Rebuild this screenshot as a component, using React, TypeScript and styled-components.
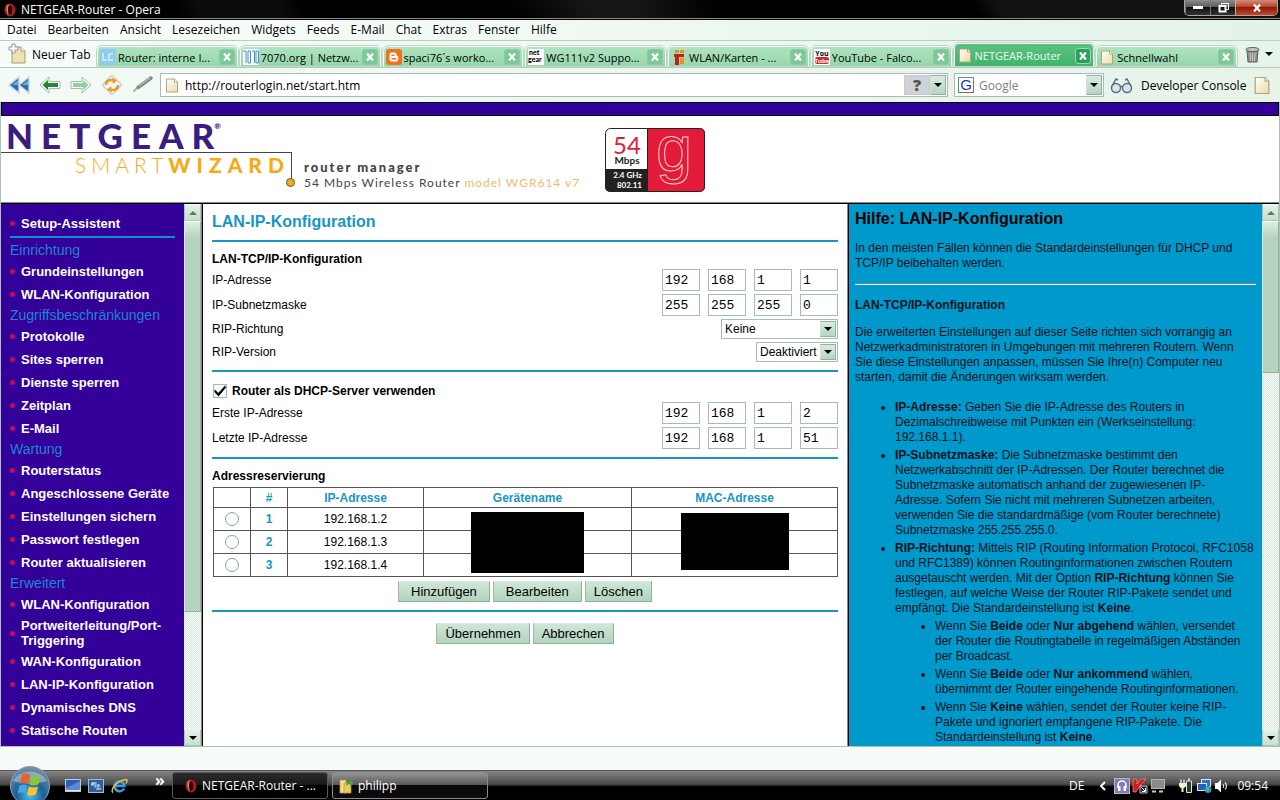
import React from "react";
import styled, { createGlobalStyle, css } from "styled-components";

const UI = `"Open Sans", "Noto Sans", sans-serif`;
const ARIAL = `"Liberation Sans", Arial, sans-serif`;
const LOGO = `Lato, "Liberation Sans", sans-serif`;

const Global = createGlobalStyle`
  * { box-sizing: border-box; }
  html, body { margin: 0; padding: 0; }
  body { font-family: ${UI}; font-size: 12px; color: #000; background: #f6fbf7; }
  button, input, select { font: inherit; margin: 0; }
  a { color: inherit; text-decoration: none; }
  svg { display: block; flex: none; }
`;

const Screen = styled.div`
  display: flex;
  flex-direction: column;
  height: 100vh;
  overflow: hidden;
`;

/* ---------- window chrome ---------- */
const TitleBar = styled.header`
  display: flex;
  justify-content: space-between;
  height: 20px;
  padding: 0 2px 0 3px;
  color: #fff;
  background: linear-gradient(60deg, #000 0 14%, #0c0c0c 16% 22%, #000 24% 40%, #151515 46% 50%, #000 56% 76%, #111 78%);
  border-bottom: 1px solid #000;
  box-shadow: inset 0 -1px #8a8a8a;
`;
const TitleText = styled.h1`
  display: flex;
  align-items: center;
  gap: 4px;
  margin: 0;
  font-size: 12px;
  font-weight: 400;
  line-height: 18px;
  height: 19px;
`;
const WindowButtons = styled.div`
  display: flex;
  height: 16px;
  border: 1px solid #a5a5a5;
  border-top: 0;
  border-radius: 0 0 5px 5px;
  overflow: hidden;
`;
const WindowButton = styled.button<{ $close?: boolean }>`
  display: flex;
  align-items: center;
  justify-content: center;
  width: ${(p) => (p.$close ? 42 : 25)}px;
  padding: 0;
  border: 0;
  border-left: ${(p) => (p.$close ? "1px solid #d9a59a" : "1px solid #777")};
  background: ${(p) =>
    p.$close
      ? "linear-gradient(#d08a7c, #b8402a 48%, #8c1c08 50%, #c8452a)"
      : "linear-gradient(#8a8c90, #55575b 48%, #111 50%, #333)"};
`;

const MenuBar = styled.nav`
  display: flex;
  align-items: center;
  gap: 11px;
  height: 21px;
  padding: 0 7px;
  background: linear-gradient(90deg, #fbfefc, #eef8f1 50%, #e4f3e9);
  border-bottom: 1px solid #b9cdc1;
`;
const MenuItem = styled.a`
  line-height: 20px;
`;

const TabBar = styled.div`
  display: flex;
  height: 27px;
  background: linear-gradient(90deg, #f6fcf8, #e6f4ea);
  border-bottom: 1px solid #b4ccbb;
`;
const NewTab = styled.button`
  display: flex;
  align-items: center;
  gap: 4px;
  width: 96px;
  padding: 0 0 0 8px;
  border: 0;
  background: none;
  white-space: nowrap;
`;
const Tabs = styled.div`
  display: flex;
  flex: 1;
  min-width: 0;
  align-items: flex-end;
`;
const Tab = styled.div<{ $active?: boolean }>`
  display: flex;
  flex: 1;
  min-width: 0;
  align-items: center;
  gap: 2px;
  height: ${(p) => (p.$active ? 25 : 22)}px;
  padding: 0 2px;
  border: 2px solid #f4fbf6;
  border-bottom: 0;
  border-radius: 6px 6px 0 0;
  outline: 1px solid #c3d5c9;
  outline-offset: -1px;
  font-size: 11px;
  color: ${(p) => (p.$active ? "#e9fff0" : "#000")};
  background: ${(p) =>
    p.$active
      ? "linear-gradient(#5ec083, #3eb36b)"
      : "linear-gradient(#aee3bf, #95d6ab)"};
`;
const TabTitle = styled.a`
  flex: 1;
  min-width: 0;
  overflow: hidden;
  white-space: nowrap;
`;
const TabClose = styled.button<{ $active?: boolean }>`
  display: flex;
  flex: none;
  align-items: center;
  justify-content: center;
  width: 16px;
  height: 16px;
  padding: 0;
  border: 1px solid ${(p) => (p.$active ? "#8fe0ab" : "#8fcaa4")};
  border-radius: 3px;
  background: ${(p) => (p.$active ? "#2fa05c" : "#7cc897")};
`;
const TrashButton = styled.button`
  display: flex;
  align-items: center;
  gap: 5px;
  width: 42px;
  padding: 0 0 0 7px;
  border: 0;
  background: none;
`;

const AddressBar = styled.div`
  display: flex;
  align-items: center;
  height: 34px;
  padding: 0 10px 0 8px;
  background: linear-gradient(90deg, #f3faf5, #e5f3e9);
`;
const NavButtons = styled.div`
  display: flex;
  gap: 9px;
  width: 152px;
`;
const IconButton = styled.button`
  display: flex;
  padding: 0;
  border: 0;
  background: none;
`;
const Field = styled.div<{ $search?: boolean }>`
  display: flex;
  align-items: center;
  flex: ${(p) => (p.$search ? "none" : "1")};
  width: ${(p) => (p.$search ? "150px" : "auto")};
  min-width: 0;
  height: 24px;
  padding: 1px 1px 1px 3px;
  gap: 5px;
  margin-right: 6px;
  background: #fff;
  border: 1px solid #a9bdb4;
`;
const FieldInput = styled.input`
  flex: 1;
  min-width: 0;
  padding: 0;
  border: 0;
  outline: 0;
  background: none;
  &::placeholder { color: #808080; opacity: 1; }
`;
const FieldTools = styled.div`
  display: flex;
`;
const HelpBadge = styled.button`
  width: 26px;
  height: 20px;
  padding: 0;
  border: 1px solid #c8ccd0;
  background: #cfd2d6;
  color: #555;
  font-size: 16px;
  font-weight: 800;
  line-height: 18px;
`;
const dropFace = css`
  display: flex;
  align-items: center;
  justify-content: center;
  width: 16px;
  padding: 0;
  background: linear-gradient(#d8ecdf, #b4d6c0);
  border: 1px solid #93b29e;
  border-left-color: #cfe2d5;
`;
const DropButton = styled.button`
  ${dropFace}
  height: 20px;
`;
const DeveloperLink = styled.a`
  flex: 1;
  padding-left: 8px;
  white-space: nowrap;
`;
const Extras = styled.div`
  display: flex;
  align-items: center;
  width: 160px;
`;

/* ---------- web page ---------- */
const Page = styled.div`
  display: flex;
  flex: 1;
  flex-direction: column;
  min-height: 0;
  border: 1px solid #a9c2b2;
  border-top: 0;
`;
const PurpleBar = styled.div`
  flex: none;
  height: 14px;
  background: #330099;
  border: 1px solid #000;
`;
const Banner = styled.div`
  display: flex;
  flex: none;
  height: 88px;
  background: #fff;
  border-bottom: 1px solid #000;
  box-shadow: inset 0 -1px #888;
`;
const Brand = styled.div`
  width: 291px;
`;
const Netgear = styled.div`
  display: flex;
  align-items: flex-start;
  height: 36px;
  padding: 0 0 0 5px;
  font-family: ${LOGO};
  font-size: 35px;
  font-weight: 900;
  line-height: 39px;
  letter-spacing: 8px;
  color: #3b1c80;
  sup { font-size: 8px; line-height: 20px; letter-spacing: 0; margin-left: -8px; }
`;
const SmartWizard = styled.div`
  position: relative;
  display: flex;
  justify-content: flex-end;
  height: 29px;
  padding-right: 1px;
  border-top: 1px solid #444;
  border-right: 1px solid #444;
  font-family: ${LOGO};
  font-size: 21px;
  font-weight: 300;
  line-height: 24px;
  letter-spacing: 5px;
  color: #f6ab15;
  b { font-weight: 900; letter-spacing: 6px; }
  &::after {
    content: "";
    position: absolute;
    right: -4px;
    bottom: -6px;
    width: 7px;
    height: 7px;
    border: 1px solid #6d5a2a;
    border-radius: 50%;
    background: #f0ad1b;
  }
`;
const Model = styled.div`
  width: 313px;
  padding: 43px 0 0 12px;
  font-family: ${LOGO};
  font-size: 12px;
  line-height: 16px;
  letter-spacing: 1px;
  color: #444;
  white-space: nowrap;
  strong { display: block; font-size: 13px; font-weight: 900; letter-spacing: 2px; }
  em { font-style: normal; color: #efbb6a; }
`;
const BadgeWrap = styled.div`
  padding-top: 12px;
`;

const Frames = styled.div`
  display: grid;
  flex: 1;
  min-height: 0;
  grid-template-columns: 201px minmax(0, 1fr) 431px;
  background: #fff;
`;
const Frame = styled.div<{ $divided?: boolean }>`
  display: flex;
  min-width: 0;
  min-height: 0;
  border-right: ${(p) => (p.$divided ? "1px solid #888" : "0")};
`;
const MainFrame = styled.main`
  min-width: 0;
  padding: 8px 9px;
  overflow: hidden;
  border-left: 1px solid #000;
  border-right: 1px solid #888;
  font-family: ${ARIAL};
`;
const Side = styled.nav`
  flex: 1;
  min-width: 0;
  padding: 8px 9px 0;
  overflow: hidden;
  background: #330099;
  font-family: ${ARIAL};
`;
const SideRule = styled.hr`
  height: 2px;
  margin: 1px 0 3px;
  border: 0;
  background: #0f8fce;
`;
const SideHeading = styled.h2`
  margin: 0;
  height: 19px;
  font-size: 14px;
  font-weight: 400;
  line-height: 19px;
  color: #1f85d6;
`;
const SideLink = styled.a`
  display: flex;
  align-items: center;
  gap: 6px;
  min-height: 23px;
  padding: 2px 0;
  font-size: 13px;
  font-weight: 700;
  line-height: 15px;
  color: #fff;
  &::before {
    content: "";
    flex: none;
    width: 5px;
    height: 5px;
    border-radius: 50%;
    background: #cc0a52;
  }
`;

const Bar = styled.div`
  display: flex;
  flex: none;
  flex-direction: column;
  width: 17px;
  background: repeating-conic-gradient(#d7e6db 0 25%, #fbfefc 0 50%) 0 0 / 2px 2px;
`;
const BarButton = styled.button`
  display: flex;
  flex: none;
  align-items: center;
  justify-content: center;
  height: 17px;
  padding: 0;
  border: 1px solid #a9c7b3;
  border-top-color: #eef7f0;
  background: linear-gradient(#e4f2e8, #c4e0cd);
`;
const Thumb = styled.div<{ $size: number }>`
  height: ${(p) => p.$size}%;
  border: 1px solid #93b29e;
  border-left-color: #dcece1;
  border-top-color: #fff;
  background: linear-gradient(#dcefe2, #b5d3bf 16px);
`;
const Track = styled.div`
  flex: 1;
`;

const PageTitle = styled.h2`
  margin: 0 0 8px;
  font-size: 16px;
  line-height: 20px;
  color: #1796c4;
`;
const Rule = styled.hr`
  height: 2px;
  margin: 0;
  border: 0;
  background: #1796c4;
`;
const Section = styled.section`
  display: flex;
  flex-direction: column;
  gap: 3px;
  padding: 10px 0 8px;
  font-size: 12px;
`;
const SectionTitle = styled.h3`
  margin: 0;
  font-size: 12px;
  line-height: 14px;
`;
const Row = styled.div`
  display: flex;
  align-items: center;
  justify-content: space-between;
`;
const Octets = styled.div`
  display: flex;
  gap: 8px;
`;
const Octet = styled.input`
  width: 38px;
  height: 22px;
  padding: 0 2px;
  border: 1px solid #a3bfae;
  background: #fff;
  font-family: "Liberation Mono", monospace;
  font-size: 13px;
`;
const SelectBox = styled.div<{ $width: number }>`
  position: relative;
  width: ${(p) => p.$width}px;
  height: 20px;
  select {
    width: 100%;
    height: 100%;
    padding: 0 0 0 3px;
    border: 1px solid #a3bfae;
    border-radius: 0;
    background: #fff;
    color: #000;
    appearance: none;
  }
`;
const SelectArrow = styled.span`
  ${dropFace}
  position: absolute;
  top: 2px;
  right: 2px;
  bottom: 2px;
  pointer-events: none;
`;
const CheckLabel = styled.label`
  display: flex;
  align-items: center;
  gap: 5px;
  height: 17px;
  padding-left: 1px;
  font-weight: 700;
`;
const Check = styled.input`
  appearance: none;
  width: 14px;
  height: 14px;
  border: 1px solid #9dbfa9;
  background: #f4fbf6;
  &:checked::before {
    content: "";
    display: block;
    height: 12px;
    background: #000;
    clip-path: polygon(8% 42%, 36% 70%, 92% 8%, 100% 26%, 38% 100%, 2% 60%);
  }
`;
const Radio = styled.input`
  appearance: none;
  display: block;
  width: 14px;
  height: 14px;
  margin: 0 auto;
  border: 1px solid #86a892;
  border-radius: 50%;
  background: #fdfffd;
`;
const Reservations = styled.table`
  width: calc(100% - 1px);
  margin: 1px 0 0 1px;
  border-collapse: collapse;
  table-layout: fixed;
  text-align: center;
  th, td { padding: 0; border: 1px solid #555; }
  thead th { height: 20px; }
  tbody tr > * { height: 23px; }
  th { color: #1796c4; }
`;
const Covered = styled.td`
  position: relative;
`;
const Blackout = styled.span<{ $w: number; $h: number; $top: number }>`
  position: absolute;
  top: ${(p) => p.$top}px;
  left: calc(50% - ${(p) => p.$w / 2}px);
  width: ${(p) => p.$w}px;
  height: ${(p) => p.$h}px;
  background: #000;
`;
const Buttons = styled.div`
  display: flex;
  justify-content: center;
  gap: 3px;
  padding-top: 1px;
`;
const PushButton = styled.button<{ $wide?: boolean }>`
  height: 21px;
  padding: 0 ${(p) => (p.$wide ? 12 : 8)}px;
  border: 1px solid #8fb09b;
  border-top-color: #d6e9dc;
  border-left-color: #9dbba8;
  background: linear-gradient(#cfe6d7, #b2d4be);
  font-size: 13px;
  line-height: 18px;
`;

const Help = styled.aside`
  flex: 1;
  min-width: 0;
  padding: 6px 6px 0;
  overflow: hidden;
  border-left: 1px solid #000;
  background: #0099cc;
  font-family: ${ARIAL};
  font-size: 12px;
  line-height: 15px;
  color: #06121c;
  h2 { margin: 0; font-size: 16px; line-height: 18px; color: #000; }
  h3 { margin: 13px 0 12px; font-size: 12px; line-height: 15px; }
  p { margin: 13px 0 12px; padding-right: 6px; }
  hr { height: 2px; margin: 0; border: 0; border-top: 1px solid #5d8797; background: #fff; }
  ul { margin: 0; padding-left: 40px; list-style: disc; }
  ul ul { padding-right: 8px; }
  h3 + p { margin: 0 0 15px; }
  li + li, li > ul { margin-top: 3px; }
`;

const StatusStrip = styled.div`
  flex: none;
  height: 23px;
  background: #f6fbf7;
`;

/* ---------- taskbar ---------- */
const TaskBar = styled.footer`
  position: relative;
  display: flex;
  flex: none;
  align-items: center;
  height: 30px;
  padding: 0 12px 0 65px;
  color: #fff;
  border-top: 1px solid #555;
  background: linear-gradient(#858585, #4a4a4a 45%, #2c2c2c 50%, #000 52%);
`;
const StartButton = styled.button`
  position: absolute;
  left: 9px;
  bottom: 0;
  padding: 0;
  border: 0;
  background: none;
`;
const QuickLaunch = styled.div`
  display: flex;
  align-items: center;
  gap: 7px;
  width: 107px;
`;
const More = styled.button`
  margin-left: 20px;
  padding: 0 0 12px;
  border: 0;
  background: none;
  color: #fff;
  font-size: 16px;
  font-weight: 700;
  line-height: 16px;
`;
const Task = styled.button<{ $active?: boolean }>`
  display: flex;
  align-items: center;
  gap: 4px;
  width: 156px;
  height: 27px;
  margin-right: 4px;
  padding: 0 0 0 ${(p) => (p.$active ? 11 : 5)}px;
  border: 1px solid ${(p) => (p.$active ? "#5a5a5a" : "#8a8a8a")};
  border-radius: 3px;
  color: #fff;
  background: ${(p) =>
    p.$active
      ? "linear-gradient(#2c2c2c, #1a1a1a 45%, #000 50%)"
      : "linear-gradient(#949494, #5b5b5b 46%, #0a0a0a 50%, #0c0c0c)"};
`;
const Tray = styled.div`
  display: flex;
  flex: 1;
  align-items: center;
  justify-content: flex-end;
  gap: 2px;
`;
const Lang = styled.span`
  margin-right: 12px;
`;
const TrayGroup = styled.span`
  display: flex;
  gap: 2px;
  margin-left: 4px;
  & + & { margin-left: 10px; }
`;
const Clock = styled.time`
  margin-left: 5px;
`;

/* ---------- drawings ---------- */
const ArrowGlyph = ({ up, color = "#000" }: { up?: boolean; color?: string }) => (
  <svg width="8" height="4" viewBox="0 0 8 4">
    <path d={up ? "M0 4h8L4 0z" : "M0 0h8L4 4z"} fill={color} />
  </svg>
);
const CrossGlyph = () => (
  <svg width="8" height="8" viewBox="0 0 8 8">
    <path d="M1 .5l6 7M7 .5l-6 7" stroke="#fff" strokeWidth="2.2" />
  </svg>
);
const OperaIcon = () => (
  <svg width="14" height="14" viewBox="0 0 14 14">
    <ellipse cx="7" cy="7" rx="5.5" ry="6.5" fill="#b5161c" />
    <ellipse cx="5.5" cy="5" rx="3" ry="4" fill="#e8575a" opacity=".6" />
    <ellipse cx="7" cy="7" rx="2.2" ry="4.8" fill="#1a0506" />
    <path d="M5 2.500q-1.200 4 0 9" fill="none" stroke="#f3b3b3" strokeWidth=".7" />
  </svg>
);
const PageIcon = ({ w = 13, h = 15 }: { w?: number; h?: number }) => (
  <svg width={w} height={h} viewBox="0 0 13 15">
    <defs>
      <linearGradient id="paper" x1="0" y1="0" x2="1" y2="1">
        <stop offset="0" stopColor="#fff" />
        <stop offset="1" stopColor="#ecd9a4" />
      </linearGradient>
    </defs>
    <path d="M1 1h8l3 3v10H1z" fill="url(#paper)" stroke="#b3a47c" />
    <path d="M9 1v3h3" fill="#fff" stroke="#b3a47c" />
  </svg>
);
const NewTabIcon = () => (
  <svg width="20" height="22" viewBox="0 0 20 22">
    <path d="M4 4h9l4 4v12H4z" fill="#f0e1b4" stroke="#a89a76" />
    <path d="M13 4v4h4" fill="#fff" stroke="#a89a76" />
    <path d="M4 1h3v3h3v3H7v3H4V7H1V4h3z" fill="#fff" stroke="#8c9a94" />
  </svg>
);
const LcIcon = () => (
  <svg width="16" height="16" viewBox="0 0 16 16">
    <rect width="16" height="16" fill="#8fcbee" />
    <path d="M3 4v7h4M13 5h-4v6h4" fill="none" stroke="#d9f1ff" strokeWidth="1.5" />
  </svg>
);
const SeventyIcon = () => (
  <svg width="16" height="16" viewBox="0 0 16 16">
    <rect width="16" height="16" fill="#fff" />
    <path d="M0 2h3v12M5 2h2.500v12H5zM9 2h2.500v12M13 2h2.500v12H13z" fill="none" stroke="#3f8fd2" />
  </svg>
);
const BloggerIcon = () => (
  <svg width="16" height="16" viewBox="0 0 16 16">
    <rect width="16" height="16" rx="3" fill="#f2711c" />
    <path d="M6 3.500h2.500a2 2 0 0 1 2 2c0 1 .3 1.200 1 1.500.8.300.8 1 .8 2v1a2.500 2.500 0 0 1-2.500 2.500H6A2.500 2.500 0 0 1 3.500 10V6A2.500 2.500 0 0 1 6 3.500z" fill="#fff" />
    <path d="M6 6.300h2M6 9.800h4" stroke="#f2711c" strokeWidth="1.400" strokeLinecap="round" />
  </svg>
);
const NetgearIcon = () => (
  <svg width="16" height="16" viewBox="0 0 16 16">
    <rect width="16" height="16" fill="#fff" />
    <text x="1" y="6" fontFamily="Lato" fontWeight="900" fontSize="7">net</text>
    <text x="0" y="13" fontFamily="Lato" fontWeight="900" fontSize="7">gear</text>
  </svg>
);
const BlocksIcon = () => (
  <svg width="16" height="16" viewBox="0 0 16 16">
    <path d="M4 1h4v3H4zM9 1h4v3H9z" fill="#f08a1d" />
    <path d="M3 5h10v3H8v8H4V8H3z" fill="#b7241c" />
    <path d="M9 9h4v6H9z" fill="#f08a1d" />
  </svg>
);
const YouTubeIcon = () => (
  <svg width="16" height="16" viewBox="0 0 16 16">
    <rect width="16" height="16" fill="#fff" />
    <text x="8" y="7" textAnchor="middle" fontFamily="Open Sans" fontWeight="700" fontSize="7">You</text>
    <rect x="1" y="8" width="14" height="7" rx="2" fill="#d52b2b" />
    <text x="8" y="14" textAnchor="middle" fontFamily="Open Sans" fontWeight="700" fontSize="6" fill="#fff">Tube</text>
  </svg>
);
const TrashIcon = () => (
  <svg width="15" height="17" viewBox="0 0 15 17">
    <path d="M2 4h11l-1 12H3z" fill="#8b8d8c" stroke="#5c5e5d" />
    <ellipse cx="7.5" cy="3.500" rx="6.500" ry="2" fill="#c5c8c6" stroke="#5c5e5d" />
    <path d="M5 7l.5 8M7.500 7v8M10 7l-.5 8" stroke="#c9cbca" />
  </svg>
);
const RewindIcon = () => (
  <svg width="22" height="20" viewBox="0 0 22 20">
    <path d="M11 2v16L1 10zM21 2v16l-10-8z" fill="#2f6bb0" stroke="#cfd9e2" strokeWidth="1.500" />
    <path d="M10 5v5H4zM20 5v5h-6z" fill="#6ea6dc" />
  </svg>
);
const BackIcon = ({ forward }: { forward?: boolean }) => (
  <svg width="22" height="20" viewBox="0 0 22 20">
    <g transform={forward ? "matrix(-1 0 0 1 22 0)" : undefined}>
      <path d="M1 10l9-8v4.500h11v7H10V18z" fill="#fff" stroke="#a9b5ad" />
      <path d="M3.500 10l5.500-5v3h10v4H9v3z" fill={forward ? "#8fd0a0" : "#1f8a2c"} />
    </g>
  </svg>
);
const ReloadIcon = () => (
  <svg width="22" height="20" viewBox="0 0 22 20">
    <g transform="rotate(45 11 10)">
      <rect x="4" y="3" width="14" height="14" rx="2" fill="#f7f7f4" stroke="#b9beb9" />
    </g>
    <path d="M5 10c0-4 4-6 7-4.500" fill="none" stroke="#ee9a1d" strokeWidth="2.500" />
    <path d="M11 2.500l5 3-4 3.500z" fill="#ee9a1d" />
    <path d="M17 10c0 4-4 6-7 4.500" fill="none" stroke="#ee9a1d" strokeWidth="2.500" />
    <path d="M11 17.500l-5-3 4-3.500z" fill="#ee9a1d" />
  </svg>
);
const WandIcon = () => (
  <svg width="22" height="20" viewBox="0 0 22 20">
    <path d="M2 16L7 11.500" stroke="#a9adaf" strokeWidth="2" strokeLinecap="round" />
    <path d="M6 12.500L19 3" stroke="#84888a" strokeWidth="3.500" strokeLinecap="round" />
    <path d="M7 11L18 3" stroke="#c9cccd" />
  </svg>
);
const GoogleIcon = () => (
  <svg width="16" height="16" viewBox="0 0 16 16">
    <rect x=".5" y=".5" width="15" height="15" fill="#fff" stroke="#5a86d8" />
    <path d="M15.500 4v11.500H6" fill="none" stroke="#d24a3a" />
    <path d="M.5 8v7.500H6" fill="none" stroke="#3f9a4a" />
    <text x="8" y="13" textAnchor="middle" fontFamily="Liberation Sans" fontSize="15" fill="#2038b8">G</text>
  </svg>
);
const GlassesIcon = () => (
  <svg width="23" height="17" viewBox="0 0 23 17" fill="none" stroke="#5f6f7b" strokeWidth="1.500">
    <circle cx="6" cy="11" r="4.500" fill="#d5e6f2" />
    <circle cx="17" cy="11" r="4.500" fill="#d5e6f2" />
    <path d="M10.500 10q1-1.500 2 0M2 9L6 2l2 1M21 9l-4-7-2 1" />
  </svg>
);
const SpeedBadge = () => (
  <svg width="100" height="64" viewBox="0 0 100 64" fontFamily="Lato">
    <defs>
      <clipPath id="badge"><rect width="100" height="64" rx="5" /></clipPath>
    </defs>
    <g clipPath="url(#badge)">
      <rect width="43" height="41" fill="#fff" />
      <rect y="41" width="43" height="23" fill="#222" />
      <rect x="43" width="57" height="64" fill="#e31b38" />
    </g>
    <rect x=".5" y=".5" width="99" height="63" rx="5" fill="none" stroke="#222" />
    <path d="M42.500 0v64" stroke="#222" />
    <text x="22" y="26" textAnchor="middle" fontSize="24" fill="#e31b38">54</text>
    <text x="22" y="36" textAnchor="middle" fontSize="10" fontWeight="700" fill="#222">Mbps</text>
    <text x="37" y="50" textAnchor="end" fontSize="8" fontWeight="700" fill="#fff">2.4 GHz</text>
    <text x="37" y="60" textAnchor="end" fontSize="8" fontWeight="700" fill="#fff">802.11</text>
    <text x="69" y="43" textAnchor="middle" fontFamily="Liberation Sans" fontSize="65" fill="none" stroke="#fbd0d5" strokeWidth="1">g</text>
  </svg>
);
const StartOrb = () => (
  <svg width="42" height="34" viewBox="0 0 42 34">
    <defs>
      <radialGradient id="orb" cx=".5" cy=".75" r=".7">
        <stop offset="0" stopColor="#4fc0ea" />
        <stop offset=".5" stopColor="#1b5f9a" />
        <stop offset="1" stopColor="#6f8ea6" />
      </radialGradient>
    </defs>
    <circle cx="21" cy="20" r="19.500" fill="url(#orb)" stroke="#8ca0ae" />
    <path d="M4 15a18 14 0 0 1 34 0q-17 6-34 0z" fill="#fff" opacity=".35" />
    <path d="M13 8q4-2 8 1l-2 9q-4-2-8 0z" fill="#e8622a" />
    <path d="M22.500 9.500q4 2 9 0l-2 9q-5 2-9 0z" fill="#8cc63c" />
    <path d="M10.500 19.500q4-2 8 0l-2 8q-4-2-8 0z" fill="#49a5e0" />
    <path d="M20 20.500q4 2 9 0l-2 8q-5 2-9 0z" fill="#fbc52d" />
  </svg>
);
const DesktopIcon = () => (
  <svg width="16" height="14" viewBox="0 0 16 14">
    <rect x=".5" y=".5" width="15" height="12" fill="#2f5fae" stroke="#b9cbe4" />
    <path d="M1 9L15 2v10H1z" fill="#5c86d0" />
    <path d="M1 11.500h14" stroke="#dbe6f5" />
  </svg>
);
const SwitchIcon = () => (
  <svg width="16" height="14" viewBox="0 0 16 14">
    <rect x=".5" y=".5" width="15" height="13" fill="#2d5f9c" stroke="#9fb9d8" />
    <path d="M3 3h6v4H3zM6 5h6v4H6zM8 8h5v3H8z" fill="#cfe0f3" stroke="#2d5f9c" strokeWidth=".7" />
  </svg>
);
const IeIcon = () => (
  <svg width="17" height="16" viewBox="0 0 17 16" fill="none">
    <path d="M13 10.500a5 5 0 1 1 .5-2.500H5" stroke="#3c9be6" strokeWidth="2.600" />
    <path d="M2 14.500C-1 13 4 3 15 1.500c2 0 1 2.500 0 4" stroke="#f2c230" strokeWidth="1.400" />
  </svg>
);
const FolderIcon = () => (
  <svg width="16" height="16" viewBox="0 0 16 16">
    <path d="M2 2h6v13H2z" fill="#f6e08a" stroke="#b89a3c" strokeWidth=".8" />
    <path d="M6 5h7v10H6z" fill="#eccb5f" stroke="#b89a3c" strokeWidth=".8" />
    <path d="M8 8c0-3 2-4 4-4V1.500L15.500 5 12 8V6q-2 0-4 2z" fill="#3fae3a" />
  </svg>
);
const ChevronIcon = () => (
  <svg width="10" height="10" viewBox="0 0 10 10">
    <path d="M7 1L3 5l4 4" fill="none" stroke="#fff" strokeWidth="2" />
  </svg>
);
const HeadphonesIcon = () => (
  <svg width="16" height="16" viewBox="0 0 16 16">
    <rect x=".5" y=".5" width="15" height="15" fill="#7f7fae" stroke="#b6b6d6" />
    <path d="M4 10V7a4 4 0 0 1 8 0v3" fill="none" stroke="#fff" strokeWidth="1.500" />
    <path d="M4 8h2.500v5H4zM9.500 8H12v5H9.500z" fill="#fff" />
  </svg>
);
const KasperskyIcon = () => (
  <svg width="16" height="16" viewBox="0 0 16 16">
    <path d="M1 1h4v5l4-5h5L8 8l-4 6H1z" fill="#e0161b" stroke="#f7c9c9" strokeWidth=".5" />
    <path d="M8 8h7v7H8z" fill="#222" stroke="#eee" strokeWidth=".8" />
    <path d="M9.500 9.500l3.500 3.500M13.500 10v3.500H10" stroke="#fff" fill="none" />
  </svg>
);
const MonitorIcon = () => (
  <svg width="16" height="16" viewBox="0 0 16 16">
    <rect x="1.500" y="1.500" width="13" height="9" fill="#8b8b8b" stroke="#b5b5b5" />
    <path d="M2 13.500h4M9 13.500h4" stroke="#c9c9c9" strokeWidth="2" />
  </svg>
);
const PowerIcon = () => (
  <svg width="16" height="16" viewBox="0 0 16 16">
    <path d="M8.500 3h5v11.500h-5z" fill="#26402c" stroke="#dfe7e0" />
    <path d="M10 1.500h2" stroke="#dfe7e0" strokeWidth="2" />
    <path d="M1 5h7v3q-1 2-2.500 2v4h-2v-4Q2 10 1 8z" fill="#f6f2d0" />
    <path d="M3 1.500V5M6 1.500V5" stroke="#f6f2d0" strokeWidth="1.300" />
  </svg>
);
const NetworkIcon = () => (
  <svg width="16" height="16" viewBox="0 0 16 16">
    <rect x="5.500" y="1.500" width="9" height="7" fill="#2c73c4" stroke="#dce8f5" />
    <rect x="1.500" y="5.500" width="9" height="7" fill="#2360ae" stroke="#dce8f5" />
    <circle cx="12" cy="11.500" r="3.500" fill="#2c8ad6" />
    <path d="M10 10q2-2 3 0t-1 4q-2-1-2-4z" fill="#4fc35a" />
  </svg>
);
const SpeakerIcon = () => (
  <svg width="16" height="16" viewBox="0 0 16 16">
    <path d="M1 5h2.500L7 1.500v13L3.500 11H1z" fill="#fff" />
    <path d="M9 6q1.500 2 0 4M11 4.500q3 3.500 0 7" fill="none" stroke="#d7ecd9" strokeWidth="1.200" />
  </svg>
);

/* ---------- data ---------- */
const menus = ["Datei", "Bearbeiten", "Ansicht", "Lesezeichen", "Widgets", "Feeds", "E-Mail", "Chat", "Extras", "Fenster", "Hilfe"];

const tabs = [
  { title: "Router: interne I...", icon: <LcIcon /> },
  { title: "7070.org | Netzw...", icon: <SeventyIcon /> },
  { title: "spaci76´s worko...", icon: <BloggerIcon /> },
  { title: "WG111v2 Suppo...", icon: <NetgearIcon /> },
  { title: "WLAN/Karten - ...", icon: <BlocksIcon /> },
  { title: "YouTube - Falco...", icon: <YouTubeIcon /> },
  { title: "NETGEAR-Router", icon: <PageIcon w={16} />, active: true },
  { title: "Schnellwahl", icon: <PageIcon w={16} /> },
];

const groups = [
  { title: "Einrichtung", links: ["Grundeinstellungen", "WLAN-Konfiguration"] },
  { title: "Zugriffsbeschränkungen", links: ["Protokolle", "Sites sperren", "Dienste sperren", "Zeitplan", "E-Mail"] },
  { title: "Wartung", links: ["Routerstatus", "Angeschlossene Geräte", "Einstellungen sichern", "Passwort festlegen", "Router aktualisieren"] },
  { title: "Erweitert", links: ["WLAN-Konfiguration", "Portweiterleitung/Port-Triggering", "WAN-Konfiguration", "LAN-IP-Konfiguration", "Dynamisches DNS", "Statische Routen"] },
];

const IpRow = ({ label, value }: { label: string; value: string }) => (
  <Row role="group" aria-label={label}>
    <span>{label}</span>
    <Octets>
      {value.split(".").map((part, i) => (
        <Octet key={i} defaultValue={part} maxLength={3} aria-label={`${label} ${i + 1}`} />
      ))}
    </Octets>
  </Row>
);

const SelectRow = ({ id, label, width, value }: { id: string; label: string; width: number; value: string }) => (
  <Row>
    <label htmlFor={id}>{label}</label>
    <SelectBox $width={width}>
      <select id={id}>
        <option>{value}</option>
      </select>
      <SelectArrow><ArrowGlyph /></SelectArrow>
    </SelectBox>
  </Row>
);

const ScrollBar = ({ size }: { size: number }) => (
  <Bar>
    <BarButton aria-label="Nach oben"><ArrowGlyph up color="#5b7a66" /></BarButton>
    <Track><Thumb $size={size} /></Track>
    <BarButton aria-label="Nach unten"><ArrowGlyph /></BarButton>
  </Bar>
);

export default function App() {
  return (
    <Screen>
      <Global />
      <TitleBar>
        <TitleText><OperaIcon />NETGEAR-Router - Opera</TitleText>
        <WindowButtons>
          <WindowButton aria-label="Minimieren">
            <svg width="12" height="5"><rect x="1" y="1" width="10" height="3" fill="#fff" /></svg>
          </WindowButton>
          <WindowButton aria-label="Verkleinern">
            <svg width="11" height="10" viewBox="0 0 11 10" fill="none" stroke="#fff">
              <path d="M3.500 2.500v-2h7v6h-2" />
              <rect x="1.500" y="3" width="6" height="5.500" strokeWidth="2" />
            </svg>
          </WindowButton>
          <WindowButton $close aria-label="Schließen"><CrossGlyph /></WindowButton>
        </WindowButtons>
      </TitleBar>
      <MenuBar>
        {menus.map((m) => <MenuItem key={m} href="#">{m}</MenuItem>)}
      </MenuBar>
      <TabBar>
        <NewTab><NewTabIcon />Neuer Tab</NewTab>
        <Tabs>
          {tabs.map((t) => (
            <Tab key={t.title} $active={t.active}>
              {t.icon}
              <TabTitle href="#">{t.title}</TabTitle>
              <TabClose $active={t.active} aria-label="Tab schließen"><CrossGlyph /></TabClose>
            </Tab>
          ))}
        </Tabs>
        <TrashButton aria-label="Papierkorb"><TrashIcon /><ArrowGlyph /></TrashButton>
      </TabBar>
      <AddressBar>
        <NavButtons>
          <IconButton aria-label="Zum Anfang"><RewindIcon /></IconButton>
          <IconButton aria-label="Zurück"><BackIcon /></IconButton>
          <IconButton aria-label="Vorwärts"><BackIcon forward /></IconButton>
          <IconButton aria-label="Neu laden"><ReloadIcon /></IconButton>
          <IconButton aria-label="Wand"><WandIcon /></IconButton>
        </NavButtons>
        <Field>
          <PageIcon w={16} h={15} />
          <FieldInput aria-label="Adresse" defaultValue="http://routerlogin.net/start.htm" />
          <FieldTools>
            <HelpBadge>?</HelpBadge>
            <DropButton aria-label="Verlauf"><ArrowGlyph /></DropButton>
          </FieldTools>
        </Field>
        <Field $search>
          <GoogleIcon />
          <FieldInput aria-label="Suche" placeholder="Google" />
          <DropButton aria-label="Suchmaschine"><ArrowGlyph /></DropButton>
        </Field>
        <Extras>
          <GlassesIcon />
          <DeveloperLink href="#">Developer Console</DeveloperLink>
          <PageIcon w={16} h={19} />
        </Extras>
      </AddressBar>

      <Page>
        <PurpleBar />
        <Banner>
          <Brand>
            <Netgear>NETGEAR<sup>®</sup></Netgear>
            <SmartWizard>SMART<b>WIZARD</b></SmartWizard>
          </Brand>
          <Model>
            <strong>router manager</strong>
            54 Mbps Wireless Router <em>model WGR614 v7</em>
          </Model>
          <BadgeWrap><SpeedBadge /></BadgeWrap>
        </Banner>
        <Frames>
          <Frame $divided>
            <Side>
              <SideLink href="#">Setup-Assistent</SideLink>
              <SideRule />
              {groups.map((g) => (
                <React.Fragment key={g.title}>
                  <SideHeading>{g.title}</SideHeading>
                  {g.links.map((l) => <SideLink key={l} href="#">{l}</SideLink>)}
                </React.Fragment>
              ))}
            </Side>
            <ScrollBar size={77} />
          </Frame>

          <MainFrame>
            <PageTitle>LAN-IP-Konfiguration</PageTitle>
            <Rule />
            <Section>
              <SectionTitle>LAN-TCP/IP-Konfiguration</SectionTitle>
              <IpRow label="IP-Adresse" value="192.168.1.1" />
              <IpRow label="IP-Subnetzmaske" value="255.255.255.0" />
              <SelectRow id="rip-dir" label="RIP-Richtung" width={117} value="Keine" />
              <SelectRow id="rip-ver" label="RIP-Version" width={82} value="Deaktiviert" />
            </Section>
            <Rule />
            <Section>
              <CheckLabel><Check type="checkbox" defaultChecked />Router als DHCP-Server verwenden</CheckLabel>
              <IpRow label="Erste IP-Adresse" value="192.168.1.2" />
              <IpRow label="Letzte IP-Adresse" value="192.168.1.51" />
            </Section>
            <Rule />
            <Section>
              <SectionTitle>Adressreservierung</SectionTitle>
              <Reservations>
                <colgroup>
                  <col width="37" /><col width="37" /><col width="136" /><col width="208" /><col />
                </colgroup>
                <thead>
                  <tr><th /><th>#</th><th>IP-Adresse</th><th>Gerätename</th><th>MAC-Adresse</th></tr>
                </thead>
                <tbody>
                  {[1, 2, 3].map((n) => (
                    <tr key={n}>
                      <td><Radio type="radio" name="reservation" aria-label={`Eintrag ${n}`} /></td>
                      <th>{n}</th>
                      <td>192.168.1.{n + 1}</td>
                      <Covered>{n === 1 && <Blackout $w={113} $h={61} $top={4} />}</Covered>
                      <Covered>{n === 1 && <Blackout $w={108} $h={57} $top={5} />}</Covered>
                    </tr>
                  ))}
                </tbody>
              </Reservations>
              <Buttons>
                <PushButton $wide>Hinzufügen</PushButton>
                <PushButton $wide>Bearbeiten</PushButton>
                <PushButton>Löschen</PushButton>
              </Buttons>
            </Section>
            <Rule />
            <Section>
              <Buttons>
                <PushButton>Übernehmen</PushButton>
                <PushButton>Abbrechen</PushButton>
              </Buttons>
            </Section>
          </MainFrame>

          <Frame>
            <Help>
              <h2>Hilfe: LAN-IP-Konfiguration</h2>
              <p>In den meisten Fällen können die Standardeinstellungen für DHCP und TCP/IP beibehalten werden.</p>
              <hr />
              <h3>LAN-TCP/IP-Konfiguration</h3>
              <p>Die erweiterten Einstellungen auf dieser Seite richten sich vorrangig an Netzwerkadministratoren in Umgebungen mit mehreren Routern. Wenn Sie diese Einstellungen anpassen, müssen Sie Ihre(n) Computer neu starten, damit die Änderungen wirksam werden.</p>
              <ul>
                <li><b>IP-Adresse:</b> Geben Sie die IP-Adresse des Routers in Dezimalschreibweise mit Punkten ein (Werkseinstellung: 192.168.1.1).</li>
                <li><b>IP-Subnetzmaske:</b> Die Subnetzmaske bestimmt den Netzwerkabschnitt der IP-Adressen. Der Router berechnet die Subnetzmaske automatisch anhand der zugewiesenen IP-<br />Adresse. Sofern Sie nicht mit mehreren Subnetzen arbeiten, verwenden Sie die standardmäßige (vom Router berechnete) Subnetzmaske 255.255.255.0.</li>
                <li><b>RIP-Richtung:</b> Mittels RIP (Routing Information Protocol, RFC1058 und RFC1389) können Routinginformationen zwischen Routern ausgetauscht werden. Mit der Option <b>RIP-Richtung</b> können Sie festlegen, auf welche Weise der Router RIP-Pakete sendet und empfängt. Die Standardeinstellung ist <b>Keine</b>.
                  <ul>
                    <li>Wenn Sie <b>Beide</b> oder <b>Nur abgehend</b> wählen, versendet der Router die Routingtabelle in regelmäßigen Abständen per Broadcast.</li>
                    <li>Wenn Sie <b>Beide</b> oder <b>Nur ankommend</b> wählen, übernimmt der Router eingehende Routinginformationen.</li>
                    <li>Wenn Sie <b>Keine</b> wählen, sendet der Router keine RIP-Pakete und ignoriert empfangene RIP-Pakete. Die Standardeinstellung ist <b>Keine</b>.</li>
                  </ul>
                </li>
              </ul>
            </Help>
            <ScrollBar size={30} />
          </Frame>
        </Frames>
      </Page>
      <StatusStrip />

      <TaskBar>
        <StartButton aria-label="Start"><StartOrb /></StartButton>
        <QuickLaunch>
          <DesktopIcon />
          <SwitchIcon />
          <IeIcon />
          <More aria-label="Mehr">»</More>
        </QuickLaunch>
        <Task $active><OperaIcon />NETGEAR-Router - ...</Task>
        <Task><FolderIcon />philipp</Task>
        <Tray>
          <Lang>DE</Lang>
          <ChevronIcon />
          <TrayGroup>
            <HeadphonesIcon />
            <KasperskyIcon />
            <MonitorIcon />
          </TrayGroup>
          <TrayGroup>
            <PowerIcon />
            <NetworkIcon />
            <SpeakerIcon />
          </TrayGroup>
          <Clock>09:54</Clock>
        </Tray>
      </TaskBar>
    </Screen>
  );
}
